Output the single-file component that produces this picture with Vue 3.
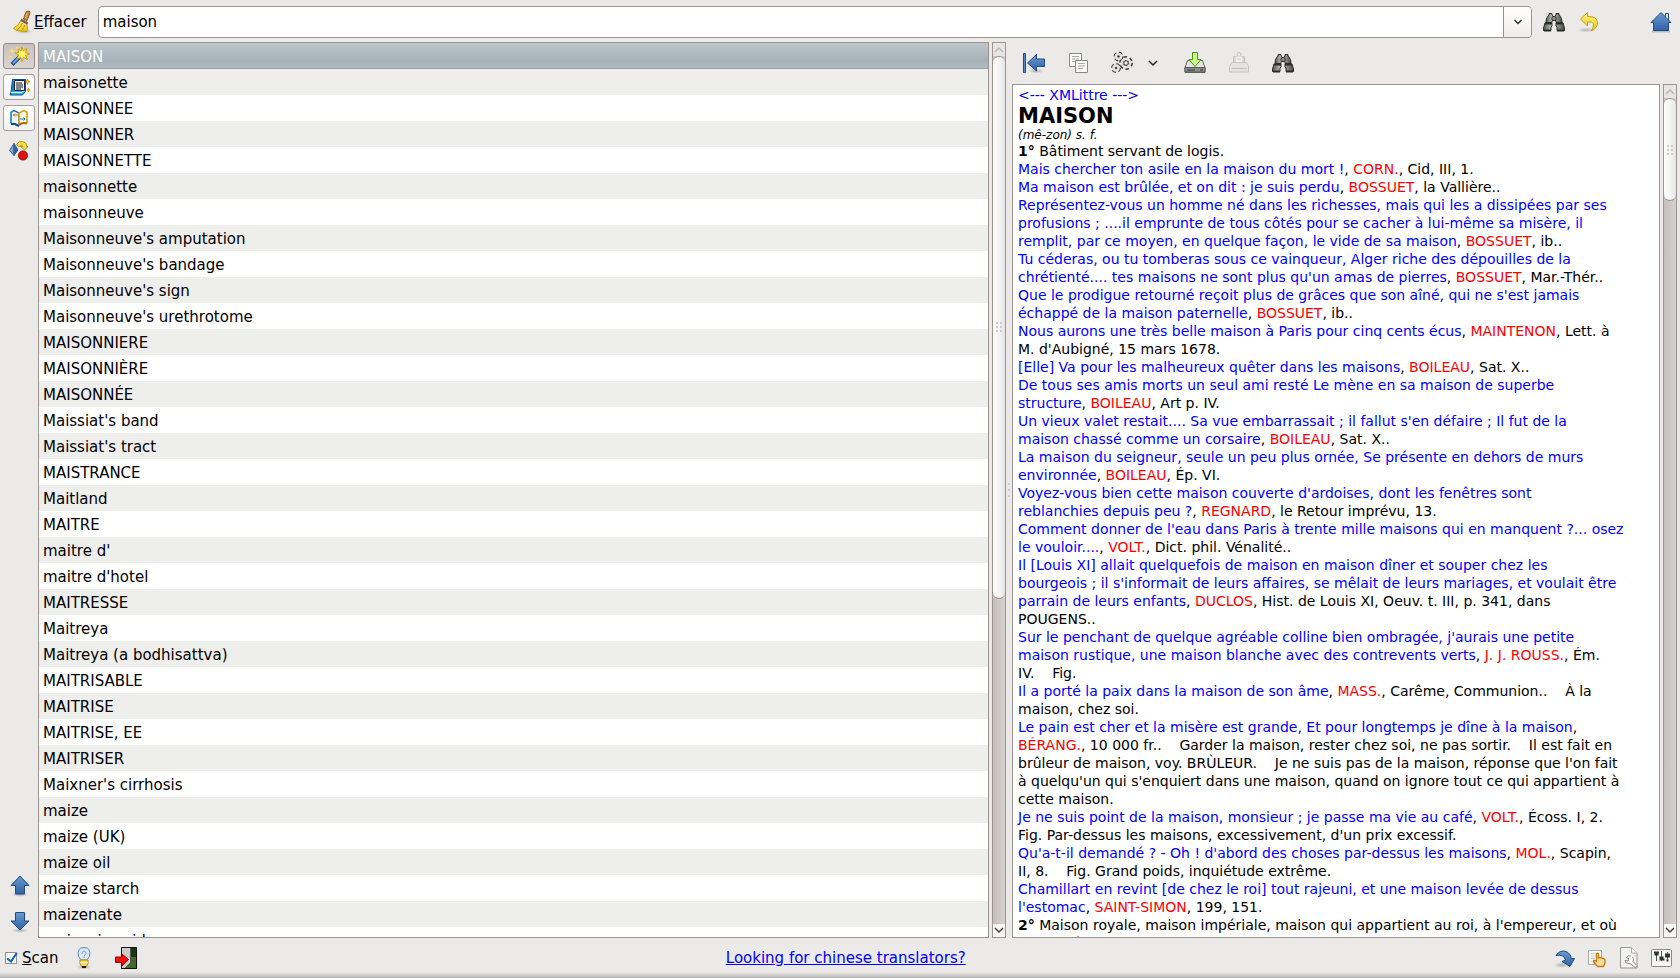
<script setup>
import { ref } from 'vue'

const query = ref('maison')
const scan = ref(true)
const selected = ref(0)

const words = [
  'MAISON', 'maisonette', 'MAISONNEE', 'MAISONNER', 'MAISONNETTE', 'maisonnette', 'maisonneuve',
  "Maisonneuve's amputation", "Maisonneuve's bandage", "Maisonneuve's sign", "Maisonneuve's urethrotome",
  'MAISONNIERE', 'MAISONNIÈRE', 'MAISONNÉE', "Maissiat's band", "Maissiat's tract", 'MAISTRANCE',
  'Maitland', 'MAITRE', "maitre d'", "maitre d'hotel", 'MAITRESSE', 'Maitreya',
  'Maitreya (a bodhisattva)', 'MAITRISABLE', 'MAITRISE', 'MAITRISE, EE', 'MAITRISER',
  "Maixner's cirrhosis", 'maize', 'maize (UK)', 'maize oil', 'maize starch', 'maizenate', 'maizenic acid',
]

// {…} marks a quotation, |…| an author, *…* a sense number
const source = [
  '*1°* Bâtiment servant de logis.',
  '{Mais chercher ton asile en la maison du mort !}, |CORN.|, Cid, III, 1.',
  '{Ma maison est brûlée, et on dit : je suis perdu}, |BOSSUET|, la Vallière..',
  '{Représentez-vous un homme né dans les richesses, mais qui les a dissipées par ses}',
  '{profusions ; ....il emprunte de tous côtés pour se cacher à lui-même sa misère, il}',
  '{remplit, par ce moyen, en quelque façon, le vide de sa maison}, |BOSSUET|, ib..',
  '{Tu céderas, ou tu tomberas sous ce vainqueur, Alger riche des dépouilles de la}',
  "{chrétienté.... tes maisons ne sont plus qu'un amas de pierres}, |BOSSUET|, Mar.-Thér..",
  "{Que le prodigue retourné reçoit plus de grâces que son aîné, qui ne s'est jamais}",
  '{échappé de la maison paternelle}, |BOSSUET|, ib..',
  '{Nous aurons une très belle maison à Paris pour cinq cents écus}, |MAINTENON|, Lett. à',
  "M. d'Aubigné, 15 mars 1678.",
  '{[Elle] Va pour les malheureux quêter dans les maisons}, |BOILEAU|, Sat. X..',
  '{De tous ses amis morts un seul ami resté Le mène en sa maison de superbe}',
  '{structure}, |BOILEAU|, Art p. IV.',
  "{Un vieux valet restait.... Sa vue embarrassait ; il fallut s'en défaire ; Il fut de la}",
  '{maison chassé comme un corsaire}, |BOILEAU|, Sat. X..',
  '{La maison du seigneur, seule un peu plus ornée, Se présente en dehors de murs}',
  '{environnée}, |BOILEAU|, Ép. VI.',
  "{Voyez-vous bien cette maison couverte d'ardoises, dont les fenêtres sont}",
  '{reblanchies depuis peu ?}, |REGNARD|, le Retour imprévu, 13.',
  "{Comment donner de l'eau dans Paris à trente mille maisons qui en manquent ?... osez}",
  '{le vouloir....}, |VOLT.|, Dict. phil. Vénalité..',
  '{Il [Louis XI] allait quelquefois de maison en maison dîner et souper chez les}',
  "{bourgeois ; il s'informait de leurs affaires, se mêlait de leurs mariages, et voulait être}",
  '{parrain de leurs enfants}, |DUCLOS|, Hist. de Louis XI, Oeuv. t. III, p. 341, dans',
  'POUGENS..',
  "{Sur le penchant de quelque agréable colline bien ombragée, j'aurais une petite}",
  '{maison rustique, une maison blanche avec des contrevents verts}, |J. J. ROUSS.|, Ém.',
  'IV.    Fig.',
  '{Il a porté la paix dans la maison de son âme}, |MASS.|, Carême, Communion..    À la',
  'maison, chez soi.',
  '{Le pain est cher et la misère est grande, Et pour longtemps je dîne à la maison},',
  '|BÉRANG.|, 10 000 fr..    Garder la maison, rester chez soi, ne pas sortir.    Il est fait en',
  "brûleur de maison, voy. BRÙLEUR.    Je ne suis pas de la maison, réponse que l'on fait",
  "à quelqu'un qui s'enquiert dans une maison, quand on ignore tout ce qui appartient à",
  'cette maison.',
  '{Je ne suis point de la maison, monsieur ; je passe ma vie au café}, |VOLT.|, Écoss. I, 2.',
  "Fig. Par-dessus les maisons, excessivement, d'un prix excessif.",
  "{Qu'a-t-il demandé ? - Oh ! d'abord des choses par-dessus les maisons}, |MOL.|, Scapin,",
  'II, 8.    Fig. Grand poids, inquiétude extrême.',
  '{Chamillart en revint [de chez le roi] tout rajeuni, et une maison levée de dessus}',
  "{l'estomac}, |SAINT-SIMON|, 199, 151.",
  "*2°* Maison royale, maison impériale, maison qui appartient au roi, à l'empereur, et où",
  'il peut résider.',
]
const kinds = { '{': 'quote', '|': 'author', '*': 'num' }
const lines = source.map((line) =>
  line.split(/(\{[^}]*\}|\|[^|]*\||\*[^*]*\*)/).filter(Boolean).map((part) => {
    const kind = kinds[part[0]]
    return kind ? { kind, text: part.slice(1, -1) } : { kind: 'plain', text: part }
  }),
)
</script>

<template>
  <div class="app">
    <svg class="defs" aria-hidden="true">
      <defs>
        <linearGradient id="blue" x1="0" y1="0" x2="0" y2="1"><stop offset="0" stop-color="#6d9bd0" /><stop offset="1" stop-color="#2f62a5" /></linearGradient>
        <linearGradient id="gold" x1="0" y1="0" x2="0" y2="1"><stop offset="0" stop-color="#fff38a" /><stop offset="1" stop-color="#e8c41c" /></linearGradient>
        <linearGradient id="metal" x1="0" y1="0" x2="1" y2="0"><stop offset="0" stop-color="#555852" /><stop offset=".4" stop-color="#c2c5bf" /><stop offset="1" stop-color="#4b4e49" /></linearGradient>
        <radialGradient id="shade"><stop offset="0" stop-color="#000" stop-opacity=".25" /><stop offset="1" stop-color="#000" stop-opacity="0" /></radialGradient>
        <symbol id="binoculars" viewBox="0 0 24 24">
          <g stroke="#2a2c29" stroke-width="1">
            <path d="M7 4.500V3.500h3V5l1.500 1.500h1L14 5V3.500h3v1l2.500 4 .5 4H14V11l-1.500-1h-1L10 11v1.500H4l.5-4z" fill="url(#metal)" />
            <path d="M3 13h7v3l-1 1v3.500H1.500V18zM14 13h7l1.500 5v2.500H15V17l-1-1z" fill="url(#metal)" />
            <path d="M3 13.500h7M14 13.500h7" stroke-width="2" />
            <circle cx="12" cy="8.500" r="2.200" fill="#8d908a" />
            <path d="M2 20.500h7M15 20.500h7" stroke-width="2" />
          </g>
        </symbol>
      </defs>
    </svg>

    <header class="top">
      <button class="flat clear">
        <svg width="24" height="24" viewBox="0 0 24 24">
          <ellipse cx="14" cy="21.500" rx="9" ry="2.500" fill="url(#shade)" />
          <path d="M13.500 9 15.500 3Q17 .2 19.300 1.200 20.500 2.500 19.500 4.500L17 10.500z" fill="#c78a3e" stroke="#8a5a20" />
          <path d="M17 3.500 15.500 8" stroke="#e8bd7a" />
          <path d="M11.500 9 17.500 12 17 15Q18 19 17 21.500L6 20.500 3.500 18Q9.500 15 10.500 11z" fill="url(#gold)" stroke="#c3a000" />
          <path d="M11 10 17.500 13.500" stroke="#7a5480" stroke-width="2" />
          <path d="M7 20Q11 17 12.500 13M11 21Q14 18 15 15" fill="none" stroke="#b99a10" />
        </svg>
        <span><u>E</u>ffacer</span>
      </button>
      <div class="combo">
        <input v-model="query" type="text" aria-label="Mot" />
        <button class="drop" aria-label="Historique"><svg width="10" height="8" viewBox="0 0 10 8"><path d="M1.500 2 5 5.500 8.500 2" fill="none" stroke="#333" stroke-width="1.500" /></svg></button>
      </div>
      <button class="flat find" aria-label="Chercher"><svg width="24" height="24"><use href="#binoculars" /></svg></button>
      <button class="flat undo" aria-label="Annuler">
        <svg width="24" height="24" viewBox="0 0 24 24">
          <ellipse cx="9" cy="20" rx="8" ry="2.500" fill="url(#shade)" />
          <path d="M10.500 2.500 3.500 9l7 7v-4q5-1 6 2 .5 3-2.500 7 6.500-2.500 6.500-8.500-.5-6.500-10-6z" fill="url(#gold)" stroke="#c9a200" />
        </svg>
      </button>
      <button class="flat home" aria-label="Accueil">
        <svg width="24" height="24" viewBox="0 0 24 24">
          <path d="M3 21.500h18" stroke="#bbb" stroke-width="2" />
          <path d="M16.500 3.500h3v7h-3z" fill="#eee" stroke="#204a87" />
          <path d="M12 2.500 2 12.500h2.500v8h15v-8H22z" fill="url(#blue)" stroke="#204a87" />
        </svg>
      </button>
    </header>

    <main class="body">
      <nav class="side">
        <button class="tab pressed" aria-label="Recherche">
          <svg width="22" height="22" viewBox="0 0 22 22">
            <path d="M4 19.500 12.500 11" stroke="#1b4a86" stroke-width="4" /><path d="M5 18.500 12 11.500" stroke="#6aa5e8" stroke-width="2" />
            <path d="m14 2 1.200 4 3.800-2.500-1.500 4.200L21.500 9l-4 1.500 2 4-4-2-1.500 4-1.200-4-4 1.500 2-4L7 8l4-.5-1.500-4L13 6z" fill="#fff36b" stroke="#cda400" />
            <path d="m4 3 .8 2L7 6l-2.200.8L4 9l-.8-2.200L1 6l2.200-1zM9 1l.6 1.400L11 3l-1.400.6L9 5l-.6-1.400L7 3l1.400-.6zM2 10l.5 1.500L4 12l-1.500.5L2 14l-.5-1.500L0 12l1.500-.5z" fill="#ffe94a" />
          </svg>
        </button>
        <button class="tab" aria-label="Dictionnaires">
          <svg width="22" height="22" viewBox="0 0 22 22">
            <path d="m19.500 3 .6 2 1.900.5-1.900.8-.6 2-.6-2-1.900-.8 1.900-.5zM20.500 12l.5 1.500 1 .5-1 .5-.5 1.500-.5-1.500-1-.5 1-.5z" fill="#f2d21a" stroke="#c9a000" />
            <path d="M4.500 3.500h13v12l-3 3.500H2l1-3z" fill="#2bb7d6" stroke="#0a4f94" />
            <path d="M3 16.500h11l2.500-3" fill="none" stroke="#d9f6ff" />
            <path d="M6.500 4.500h10v10h-10z" fill="#fff" stroke="#14206a" />
            <path d="M8 7h6M8 9h7M8 11h7M8 13h5" stroke="#111" />
            <path d="M5 5v10" stroke="#0a4f94" />
          </svg>
        </button>
        <button class="tab" aria-label="Groupes">
          <svg width="22" height="22" viewBox="0 0 22 22">
            <path d="M3 16.500V5.500l3-2 5 2.500v11" fill="#e8f4ff" stroke="#1673c8" stroke-width="1.500" />
            <path d="M11 17V6l5-2.500 3 2v11" fill="#fffbe0" stroke="#d89b00" stroke-width="1.500" />
            <path d="M11 18q3-3 8-1.500" fill="none" stroke="#a86a00" stroke-width="2" />
            <path d="M3 17h4l4 2" fill="none" stroke="#0c4a94" stroke-width="2" />
            <path d="M5 8h5M7 6.500 5.500 8 7 9.500" fill="none" stroke="#c07800" />
            <path d="M12 12h5M15.500 10.500 17 12l-1.500 1.500" fill="none" stroke="#1673c8" />
          </svg>
        </button>
        <button class="tab bare" aria-label="Convertir">
          <svg width="22" height="22" viewBox="0 0 22 22">
            <path d="M6 3.500v12L1.500 10.500z" fill="#7aa6d8" stroke="#3a5f8c" /><path d="M6 3.500 10 10l-4 5.500z" fill="#2e5f9f" stroke="#3a5f8c" />
            <path d="M8.500 5Q11-.5 17 2.500 19 4 18.500 6.500h1.500L16.500 10 12.500 6.500H15Q13.500 4 11 6.500z" fill="#f4dc4a" stroke="#b39a10" />
            <circle cx="15" cy="15.500" r="4.500" fill="#dc1414" stroke="#a80000" />
          </svg>
        </button>
        <div class="arrows">
          <button class="flat" aria-label="Précédent"><svg width="24" height="24" viewBox="0 0 24 24"><ellipse cx="12" cy="20.500" rx="9" ry="2.500" fill="url(#shade)" /><path d="M12 2 21 11.500h-4.500v8.500h-9v-8.500H3z" fill="url(#blue)" stroke="#204a87" /></svg></button>
          <button class="flat" aria-label="Suivant"><svg width="24" height="24" viewBox="0 0 24 24"><ellipse cx="12" cy="20.500" rx="9" ry="2.500" fill="url(#shade)" /><path d="M12 20 3 11h4.500V2.500h9V11H21z" fill="url(#blue)" stroke="#204a87" /></svg></button>
        </div>
      </nav>

      <section class="pane">
        <ul class="words box">
          <li v-for="(word, i) in words" :key="word" :class="{ on: i === selected }" @click="selected = i">{{ word }}</li>
        </ul>
        <div class="scroll">
          <button class="dim" aria-label="Monter"><svg width="10" height="7" viewBox="0 0 10 7"><path d="M1 6 5 2l4 4" fill="none" stroke="#bbb6b4" stroke-width="1.500" /></svg></button>
          <div class="track long"><div class="thumb"><i v-for="n in 6" :key="n"></i></div></div>
          <button aria-label="Descendre"><svg width="10" height="7" viewBox="0 0 10 7"><path d="M1 1l4 4 4-4" fill="none" stroke="#444" stroke-width="1.500" /></svg></button>
        </div>
      </section>

      <div class="splitter"><i></i><i></i><i></i></div>

      <section class="right">
        <div class="tools">
          <button class="flat" aria-label="Début">
            <svg width="24" height="24" viewBox="0 0 24 24"><ellipse cx="14" cy="20" rx="8" ry="2.500" fill="url(#shade)" /><path d="M1.500 2.500h2v19h-2z" fill="#5b8cc8" stroke="#204a87" /><path d="M14.500 3.500v4.500h8v7.500h-8V20L5.500 12z" fill="url(#blue)" stroke="#204a87" /></svg>
          </button>
          <button class="flat" aria-label="Copier">
            <svg width="24" height="24" viewBox="0 0 24 24"><g fill="#fafafa" stroke="#888a85"><path d="M3.500 2.500h12v13h-12z" /><path d="M9.500 9.500h12v12h-12z" /></g><path d="M6 5.500h7M6 8h7M6 10.500h3M12 12.500h7M12 15h7M12 17.500h5" stroke="#a9aba6" /></svg>
          </button>
          <button class="flat" aria-label="Réglages">
            <svg width="24" height="24" viewBox="0 0 24 24"><g fill="none"><g stroke="#3e413d" stroke-width="5"><circle cx="8.500" cy="5.500" r="2.500" stroke-dasharray="2.400 1.500" /><circle cx="6" cy="17" r="2.500" stroke-dasharray="2.400 1.500" /><circle cx="16" cy="12" r="4.500" stroke-dasharray="2.600 2.100" /></g><g stroke="#e4e4df" stroke-width="2.500"><circle cx="8.500" cy="5.500" r="2.500" /><circle cx="6" cy="17" r="2.500" /><circle cx="16" cy="12" r="4.200" /></g><circle cx="16" cy="12" r="2.300" stroke="#444" /><circle cx="8.500" cy="5.500" r="1" fill="#333" /><circle cx="6" cy="17" r="1" fill="#333" /></g></svg>
          </button>
          <button class="flat more" aria-label="Plus"><svg width="10" height="8" viewBox="0 0 10 8"><path d="M1 2l4 4 4-4" fill="none" stroke="#222" stroke-width="1.500" /></svg></button>
          <button class="flat" aria-label="Enregistrer">
            <svg width="24" height="24" viewBox="0 0 24 24"><path d="M4.500 9.500h15l2.500 7v5H2v-5z" fill="#e4e5e2" stroke="#666864" /><path d="M2 16.500h20v4.500H2z" fill="#8c8f8a" stroke="#555753" /><path d="M4 19h8M17 19h3" stroke="#333" /><path d="M9.500 1.500h5v7H18l-6 7-6-7h3.500z" fill="#c9f58a" stroke="#4e9a06" /></svg>
          </button>
          <button class="flat" aria-label="Imprimer" disabled>
            <svg width="24" height="24" viewBox="0 0 24 24" stroke="#c3c2c0"><circle cx="12" cy="3.500" r="2" fill="none" /><path d="M6.500 5.500h11v8h-11z" fill="#f0efee" /><path d="M5 11.500h14q2 1 2.500 4v5.500h-19v-5.500q.5-3 2.500-4z" fill="#e4e3e2" /><path d="M8 5.500v6h8v-6" fill="#f4f3f3" /><path d="M4.500 17.500h15" fill="none" /><path d="M10 8h4" fill="none" /></svg>
          </button>
          <button class="flat" aria-label="Chercher dans l'article"><svg width="24" height="24"><use href="#binoculars" /></svg></button>
        </div>
        <div class="pane">
          <article class="box">
            <a href="#" class="line">&lt;--- XMLittre ---&gt;</a>
            <h1>MAISON</h1>
            <em>(mê-zon) s. f.</em>
            <p v-for="(line, i) in lines" :key="i" class="line"><span v-for="(part, j) in line" :key="j" :class="part.kind">{{ part.text }}</span></p>
          </article>
          <div class="scroll">
            <button class="dim" aria-label="Monter"><svg width="10" height="7" viewBox="0 0 10 7"><path d="M1 6 5 2l4 4" fill="none" stroke="#bbb6b4" stroke-width="1.500" /></svg></button>
            <div class="track short"><div class="thumb"><i v-for="n in 6" :key="n"></i></div></div>
            <button aria-label="Descendre"><svg width="10" height="7" viewBox="0 0 10 7"><path d="M1 1l4 4 4-4" fill="none" stroke="#444" stroke-width="1.500" /></svg></button>
          </div>
        </div>
      </section>
    </main>

    <footer class="bottom">
      <label class="scan"><input v-model="scan" type="checkbox" /><span><u>S</u>can</span></label>
      <button class="flat bulb" aria-label="Astuce">
        <svg width="24" height="24" viewBox="0 0 24 24">
          <ellipse cx="12" cy="21" rx="8" ry="2.500" fill="url(#shade)" />
          <path d="M8.500 14Q8 12 6.500 10.500 4.500 1.500 12 1.500T17.500 10.500Q16 12 15.500 14z" fill="#dbe9f8" stroke="#5f86b2" />
          <path d="M10 8q0-3 2-3t2 2.500L12 10v2" fill="none" stroke="#7d9fc9" />
          <path d="M8 14h8v4l-2 3h-4l-2-3z" fill="#f6d96a" stroke="#b58a1c" /><path d="M8 16.500h8" stroke="#fff2b0" /><path d="M10 21h4" stroke="#222" stroke-width="2" />
        </svg>
      </button>
      <button class="flat" aria-label="Quitter">
        <svg width="24" height="24" viewBox="0 0 24 24">
          <path d="M7.500 1.500h15v21h-15z" fill="#3f6a2a" stroke="#111" /><path d="M16 2h6v9h-6z" fill="#173812" />
          <path d="M8 2h8v15l-5 5H8z" fill="#c9ccc8" /><path d="M16.500 2v15l-5.500 5" fill="none" stroke="#555" />
          <path d="M1.500 11v5.500H8V20l6.500-6.500L8 8v3z" fill="#f01010" stroke="#a00000" />
        </svg>
      </button>
      <div class="notice"><a href="#">Looking for chinese translators?</a></div>
      <div class="status">
        <button class="flat" aria-label="Suivre">
          <svg width="24" height="24" viewBox="0 0 24 24"><ellipse cx="9" cy="19" rx="8" ry="3" fill="url(#shade)" /><path d="M3 9.500Q7 3.500 13 5.500q5 2 5 7h3.500L17 20.500 9 15.500l3.500-1.500Q11 8 3 9.500z" fill="url(#blue)" stroke="#204a87" /></svg>
        </button>
        <button class="flat" aria-label="Sélection">
          <svg width="24" height="24" viewBox="0 0 24 24"><path d="M3.500 4.500h13v14h-13z" fill="#fbfbfa" stroke="#a8aaa5" /><path d="M6 7.500h8M6 10h5M6 12.500h4M6 15h3" stroke="#c6c8c3" /><path d="M11.500 13V8q1.500-1.500 2 0v4q1.500-1 2.500 0 1-.5 2 .5 1.500 0 2 1.500v3l-1.500 3.500h-6l-4-5q.5-2 3 0z" fill="#f8dca0" stroke="#c17d11" stroke-width="1.300" /></svg>
        </button>
        <button class="flat" aria-label="Préférences">
          <svg width="24" height="24" viewBox="0 0 24 24"><path d="M3.500 1.500h11l5.500 5.500v15H3.500z" fill="#f1f1f0" stroke="#999b97" /><path d="M14.500 1.500V7H20" fill="#fff" stroke="#aaa" /><path d="M14 10q-3-1-4.500 1.500L12 13l-1 2-3-.5Q8 18 12 17.500l2 .5 4 3.500q2 0 2-2l-4-4Q17 12 15.500 11" fill="#fff" stroke="#888a85" /></svg>
        </button>
        <button class="flat" aria-label="Options">
          <svg width="24" height="24" viewBox="0 0 24 24"><rect x="2.500" y="3.500" width="20" height="17" rx="1" fill="#f6f6f5" stroke="#888a85" /><path d="M7.500 6v9M12.500 5v10M18.500 6v9" stroke="#555" /><path d="M5 6.500h5M5.500 8.500h4M10.500 13.500h5M10.500 11.500h4M16 8.500h5M16 10.500h5M17.500 14.500h2" stroke="#2e3436" stroke-width="2" /></svg>
        </button>
      </div>
    </footer>
  </div>
</template>

<style scoped>
.app {
  display: flex;
  flex-direction: column;
  height: 100vh;
  overflow: hidden;
  background: #ebeae9;
  color: #000;
  font: 15px/18px "DejaVu Sans", sans-serif;
}
.app * { box-sizing: border-box; }
.defs { position: absolute; width: 0; height: 0; }
button, input { font: inherit; color: inherit; margin: 0; }
svg { display: block; flex: none; }
.flat { display: flex; align-items: center; border: 0; padding: 0; background: none; }
a { color: #00f; }

.top { display: flex; align-items: center; height: 42px; padding: 6px 7px 4px 10px; }
.clear { margin-right: 11px; }
.combo { display: flex; flex: 1; height: 32px; margin-right: 10px; border: 1px solid #9d9391; border-radius: 4px; background: #fff; overflow: hidden; }
.combo input { flex: 1; min-width: 0; border: 0; padding: 0 4px; background: none; outline: 0; }
.drop { display: flex; align-items: center; justify-content: center; width: 28px; border: 0; border-left: 1px solid #9d9391; padding: 0; background: linear-gradient(#fff, #eeedec); }
.undo { margin-left: 11px; }
.home { margin-left: 48px; }

.body { display: grid; grid-template-columns: 38px minmax(0, 968fr) 6px minmax(0, 665fr); flex: 1; min-height: 0; padding-right: 3px; }
.side { display: flex; flex-direction: column; align-items: flex-start; gap: 5px; padding: 1px 3px 4px; }
.tab { display: flex; align-items: center; justify-content: center; width: 32px; height: 26px; padding: 0; border: 1px solid #a69f9d; border-radius: 3px; background: linear-gradient(#fff, #f3f2f2); }
.pressed { background: linear-gradient(#c9c1c0, #d9d3d2); border-color: #958b89; }
.bare { border-color: transparent; background: none; margin-top: 2px; }
.arrows { display: flex; flex-direction: column; gap: 12px; margin: auto 0 0 5px; }

.pane { display: flex; gap: 3px; min-width: 0; min-height: 0; flex: 1; }
.box { flex: 1; min-width: 0; overflow: hidden; border: 1px solid #9d9391; background: #fff; white-space: pre; }
.words { list-style: none; margin: 0; padding: 0; }
.words li { height: 26px; padding: 1px 4px 0; line-height: 26px; }
.words li:nth-child(even) { background: #eeeeed; }
.words .on { color: #fff; background: linear-gradient(#bcc6cb, #a5b2b8 70%, #b0bcc1); border-bottom: 1px solid #91a3ad; }

.scroll { display: flex; flex-direction: column; width: 14px; border: 1px solid #9d9391; background: linear-gradient(90deg, #c5bebd, #d6d1d0); }
.scroll button { display: flex; align-items: center; justify-content: center; height: 13px; border: 0; padding: 0; background: #f8f7f7; }
.scroll .dim { background: #e8e6e5; }
.track { display: grid; flex: 1; min-height: 0; }
.long { grid-template-rows: 5fr 3fr; }
.short { grid-template-rows: 1fr 7fr; }
.thumb { display: grid; grid-template-columns: 2px 2px; gap: 2px; align-content: center; justify-content: center; border: 1px solid #9d9391; border-width: 1px 0; border-radius: 6px; background: linear-gradient(90deg, #fff, #f2f1f1 60%, #e6e4e4); }
.thumb i { height: 2px; background: #cfcbca; }

.splitter { display: flex; flex-direction: column; align-items: center; justify-content: center; gap: 4px; }
.splitter i { width: 2px; height: 2px; background: #cfcccb; }

.right { display: flex; flex-direction: column; min-width: 0; min-height: 0; }
.tools { display: flex; align-items: center; height: 42px; gap: 20px; padding-left: 10px; }
.more { width: 10px; margin: 0 5px 0 -6px; }
article { padding: 1px 4px 0 5px; font-size: 14px; }
.line { display: block; margin: 0; height: 18px; }
a.line { text-decoration: none; }
h1 { margin: 0; font: bold 21px/24px "DejaVu Sans", sans-serif; }
em { display: block; font-size: 12px; line-height: 14px; }
.quote { color: #00f; }
.author { color: #f00; }
.num { font-weight: bold; }

.bottom { display: flex; align-items: center; height: 40px; padding: 0 7px 0 5px; background: linear-gradient(transparent 34px, #b5b2b1); }
.scan { display: flex; align-items: center; gap: 5px; }
.scan input { appearance: none; width: 12px; height: 12px; border: 1px solid #8f9498; background: #fff; position: relative; }
.scan input:checked::after { content: ""; position: absolute; left: 3px; top: -2px; width: 4px; height: 9px; border: solid #1463c4; border-width: 0 2px 2px 0; transform: rotate(35deg); }
.bulb { margin: 0 18px 0 14px; }
.notice { flex: 1; text-align: center; }
.status { display: flex; gap: 8px; }
</style>

<style>
body { overflow: hidden; background: #ebeae9; }
</style>
